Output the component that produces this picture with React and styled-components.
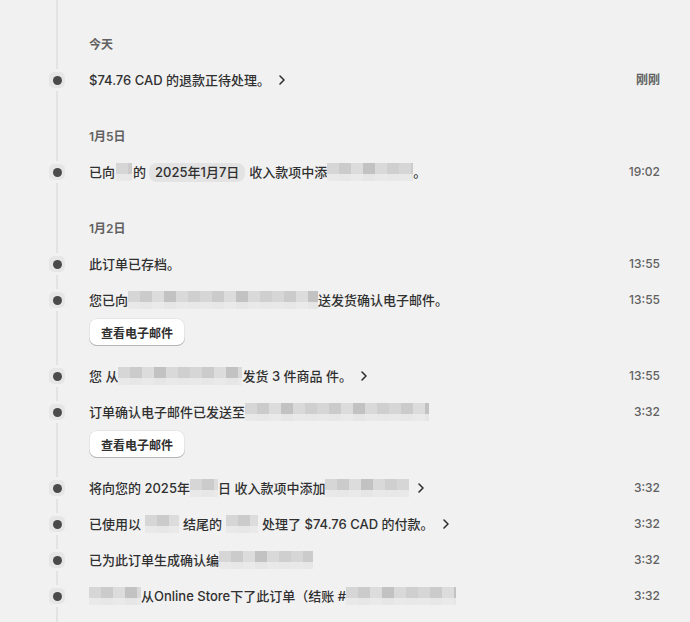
import React from "react";
import styled, { createGlobalStyle } from "styled-components";
import { ChevronRight } from "lucide-react";

const GlobalStyle = createGlobalStyle`
  html, body {
    margin: 0;
    padding: 0;
    background: #f1f1f1;
  }
  body {
    font-family: Inter, "Noto Sans CJK SC", "Noto Sans", sans-serif;
    color: #303030;
  }
`;

const Timeline = styled.div`
  position: relative;
  min-height: 100vh;
  box-sizing: border-box;
  padding: 6px 30px 0 49px;

  &::before {
    content: "";
    position: absolute;
    left: 56px;
    top: 0;
    bottom: 0;
    width: 2px;
    background: #e3e3e3;
  }
`;

const DayHeader = styled.div`
  padding: 31px 0 9px 40px;
  font-size: 12px;
  line-height: 16px;
  font-weight: 600;
  color: #616161;
`;

const Row = styled.div`
  display: grid;
  grid-template-columns: 16px 1fr auto;
  column-gap: 24px;
  align-items: start;
  padding: ${(p) => (p.$withAction ? "8px 0 12px" : "8px 0")};
`;

const Dot = styled.span`
  position: relative;
  z-index: 1;
  width: 16px;
  height: 16px;
  margin-top: 2px;
  border-radius: 5px;
  background: #e6e6e6;
  box-shadow: 0 0 0 3px #f1f1f1;
  display: flex;
  align-items: center;
  justify-content: center;

  &::after {
    content: "";
    width: 9px;
    height: 9px;
    border-radius: 50%;
    background: #4a4a4a;
  }
`;

const Body = styled.div`
  display: flex;
  flex-direction: column;
  align-items: flex-start;
  gap: 8px;
`;

const Message = styled.div`
  font-size: 13px;
  line-height: 20px;
  font-weight: 500;
  color: #303030;
  display: flex;
  align-items: center;
  white-space: nowrap;
`;

const Time = styled.span`
  font-size: 12px;
  line-height: 20px;
  font-weight: ${(p) => (p.$bold ? 600 : 450)};
  color: #616161;
  white-space: nowrap;
`;

const Pill = styled.span`
  display: inline-block;
  background: #e3e3e3;
  border-radius: 8px;
  padding: 0 6px;
  margin: 0 4px 0 3px;
  line-height: 19px;
`;

const Redacted = styled.span`
  display: inline-block;
  height: 18px;
  width: ${(p) => p.$w}px;
  margin: 0 ${(p) => p.$gap ?? 0}px;
  background:
    linear-gradient(180deg, rgba(241, 241, 241, 0) 0 11px, rgba(236, 236, 236, 0.85) 11px 18px),
    linear-gradient(
      90deg,
      #d6d6d6 0 12px,
      #cbcbcb 12px 24px,
      #dcdcdc 24px 36px,
      #c2c2c2 36px 48px,
      #d9d9d9 48px 60px,
      #cfcfcf 60px 72px
    );
  background-size: 100% 100%, 72px 100%;
`;

const Chevron = styled(ChevronRight)`
  margin-left: 4px;
  color: #303030;
  flex-shrink: 0;
`;

const ActionButton = styled.button`
  height: 28px;
  padding: 0 12px;
  border: none;
  border-radius: 8px;
  background: #ffffff;
  font-family: inherit;
  font-size: 12px;
  font-weight: 600;
  color: #303030;
  box-shadow:
    0 -1px 0 0 #b5b5b5 inset,
    0 0 0 1px rgba(0, 0, 0, 0.1) inset,
    0 0.5px 0 1.5px #fff inset;
  cursor: pointer;
`;

const Event = ({ children, time, bold, arrow, action }) => (
  <Row $withAction={!!action}>
    <Dot />
    <Body>
      <Message>
        {children}
        {arrow && <Chevron size={16} strokeWidth={2.4} />}
      </Message>
      {action && <ActionButton>{action}</ActionButton>}
    </Body>
    <Time $bold={bold}>{time}</Time>
  </Row>
);

export default function App() {
  return (
    <>
      <GlobalStyle />
      <Timeline>
        <DayHeader>今天</DayHeader>
        <Event time="刚刚" bold arrow>
          $74.76 CAD 的退款正待处理。
        </Event>

        <DayHeader>1月5日</DayHeader>
        <Event time="19:02">
          已向<Redacted $w={16} $gap={1} />的<Pill>2025年1月7日</Pill>收入款项中添
          <Redacted $w={86} />。
        </Event>

        <DayHeader>1月2日</DayHeader>
        <Event time="13:55">此订单已存档。</Event>
        <Event time="13:55" action="查看电子邮件">
          您已向<Redacted $w={190} />送发货确认电子邮件。
        </Event>
        <Event time="13:55" arrow>
          您 从 <Redacted $w={124} />发货 3 件商品 件。
        </Event>
        <Event time="3:32" action="查看电子邮件">
          订单确认电子邮件已发送至<Redacted $w={184} />
        </Event>
        <Event time="3:32" arrow>
          将向您的 2025年<Redacted $w={28} />日 收入款项中添加 <Redacted $w={84} />
        </Event>
        <Event time="3:32" arrow>
          已使用以<Redacted $w={34} $gap={4} />结尾的<Redacted $w={32} $gap={4} />处理了 $74.76 CAD 的付款。
        </Event>
        <Event time="3:32">
          已为此订单生成确认编<Redacted $w={94} />
        </Event>
        <Event time="3:32">
          <Redacted $w={52} />从Online Store下了此订单（结账 #<Redacted $w={110} />
        </Event>
      </Timeline>
    </>
  );
}
